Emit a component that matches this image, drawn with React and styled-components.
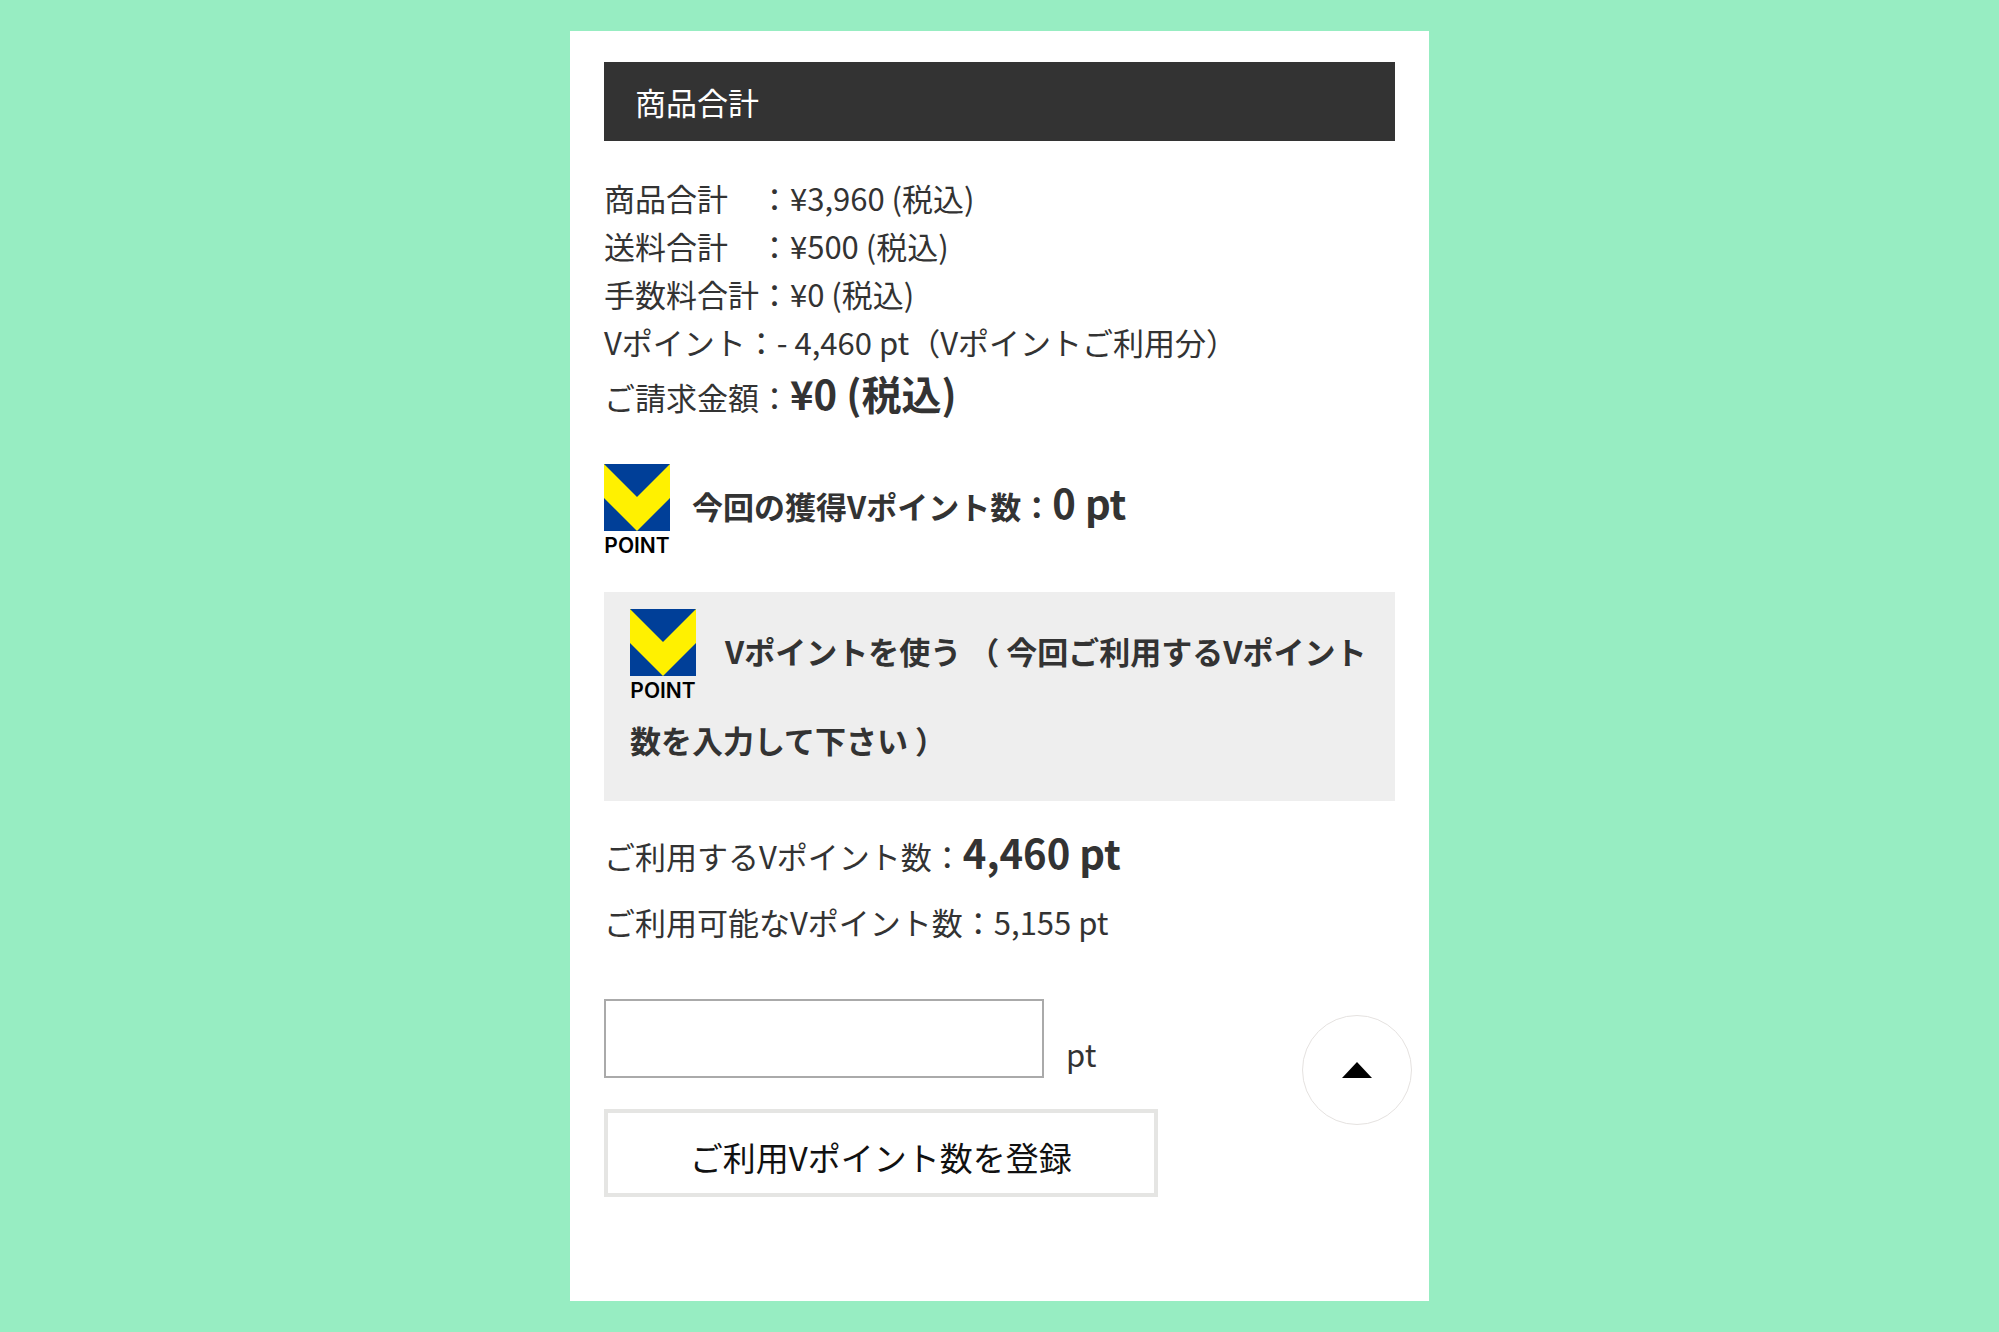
import React, { Component } from "react";
import styled, { createGlobalStyle } from "styled-components";

const totals = [
	{ label: "商品合計　：", value: "¥3,960 (税込)" },
	{ label: "送料合計　：", value: "¥500 (税込)" },
	{ label: "手数料合計：", value: "¥0 (税込)" },
	{ label: "Vポイント：", value: "- 4,460 pt（Vポイントご利用分）" },
	{ label: "ご請求金額：", value: "¥0 (税込)", total: true }
];

const VPointLogo = props => (
	<Logo viewBox="0 0 66 90" role="img" aria-label="V POINT" {...props}>
		<rect width="66" height="67" fill="#003f98" />
		<path d="M0 0 L33 33 L66 0 V34 L33 67 L0 34 Z" fill="#fff100" />
		<LogoText x="33" y="89" textAnchor="middle">
			POINT
		</LogoText>
	</Logo>
);

class App extends Component {
	state = {
		points: ""
	};

	onPointsChange = e => {
		this.setState({ points: e.target.value });
	};

	onSubmit = e => {
		e.preventDefault();
	};

	onScrollTop = () => {
		window.scrollTo(0, 0);
	};

	render() {
		return (
			<Page>
				<GlobalStyle />
				<Card>
					<Title>商品合計</Title>

					<Totals>
						{totals.map(({ label, value, total }) => (
							<TotalRow key={label} $total={total}>
								<dt>{label}</dt>
								<TotalValue $total={total}>{value}</TotalValue>
							</TotalRow>
						))}
					</Totals>

					<Earned>
						<VPointLogo />
						<span>
							今回の獲得Vポイント数：<Large>0 pt</Large>
						</span>
					</Earned>

					<UsePoints>
						<InlineLogo />
						Vポイントを使う （ 今回ご利用するVポイント数を入力して下さい ）
					</UsePoints>

					<Balance>
						<BalanceRow>
							ご利用するVポイント数：<Large>4,460 pt</Large>
						</BalanceRow>
						<BalanceRow>ご利用可能なVポイント数：5,155 pt</BalanceRow>
					</Balance>

					<form onSubmit={this.onSubmit}>
						<Field>
							<PointsInput
								id="points"
								type="text"
								inputMode="numeric"
								value={this.state.points}
								onChange={this.onPointsChange}
							/>
							<Unit htmlFor="points">pt</Unit>
						</Field>
						<SubmitButton type="submit">ご利用Vポイント数を登録</SubmitButton>
					</form>

					<ScrollTopButton type="button" aria-label="ページトップへ" onClick={this.onScrollTop}>
						<svg width="30" height="16" viewBox="0 0 30 16">
							<path d="M15 0 L30 16 H0 Z" fill="#000" />
						</svg>
					</ScrollTopButton>
				</Card>
			</Page>
		);
	}
}

export default App;

// styled components -------------------------

const GlobalStyle = createGlobalStyle`
	*, *::before, *::after {
		box-sizing: border-box;
	}

	body {
		margin: 0;
		background: #97edc2;
		color: #333;
		font-family: "Noto Sans CJK JP", sans-serif;
		font-size: 31px;
		line-height: 48px;
	}

	h1, h2, p, dl, dd {
		margin: 0;
	}

	button, input {
		font-family: inherit;
	}
`;

const Page = styled.div`
	display: flex;
	justify-content: center;
	padding: 31px 16px 32px;
`;

const Card = styled.main`
	position: relative;
	width: 100%;
	max-width: 859px;
	padding: 31px 34px 104px;
	background: #fff;
`;

const Title = styled.h1`
	padding: 16px 31px 15px;
	background: #333;
	color: #fff;
	font-size: 31px;
	font-weight: 400;
`;

const Totals = styled.dl`
	margin-top: 33px;
`;

const TotalRow = styled.div`
	display: flex;
	align-items: baseline;
	line-height: ${props => (props.$total ? "54px" : "48px")};
`;

const TotalValue = styled.dd`
	font-size: ${props => (props.$total ? "40px" : "31px")};
	font-weight: ${props => (props.$total ? 700 : 400)};
`;

const Large = styled.strong`
	font-size: 40px;
	font-weight: 700;
`;

const Logo = styled.svg`
	flex: none;
	width: 66px;
	height: 90px;
	overflow: visible;
`;

const LogoText = styled.text`
	fill: #000;
	font-family: Inter, sans-serif;
	font-size: 21px;
	font-weight: 600;
`;

const InlineLogo = styled(VPointLogo)`
	margin-right: 29px;
	vertical-align: -35px;
`;

const Earned = styled.p`
	display: flex;
	align-items: flex-start;
	gap: 22px;
	margin-top: 40px;
	font-weight: 700;
	line-height: 76px;
`;

const UsePoints = styled.h2`
	margin-top: 38px;
	padding: 17px 26px 20px;
	background: #eee;
	font-size: 31px;
	font-weight: 700;
	line-height: 82px;
`;

const Balance = styled.div`
	margin-top: 18px;
`;

const BalanceRow = styled.p`
	line-height: 66px;
`;

const Field = styled.div`
	display: flex;
	align-items: flex-end;
	gap: 22px;
	margin-top: 44px;
`;

const PointsInput = styled.input`
	width: 440px;
	height: 79px;
	padding: 0 16px;
	border: 2px solid #aaa;
	border-radius: 0;
	background: #fff;
	color: #333;
	font-size: 31px;
`;

const Unit = styled.label`
	line-height: 48px;
`;

const SubmitButton = styled.button`
	display: block;
	width: 70%;
	margin-top: 31px;
	padding: 20px 16px 12px;
	border: 4px solid #e5e5e3;
	background: #fff;
	color: #111;
	font-size: 33px;
	line-height: 48px;
	cursor: pointer;
`;

const ScrollTopButton = styled.button`
	position: absolute;
	right: 17px;
	bottom: 176px;
	display: flex;
	align-items: center;
	justify-content: center;
	width: 110px;
	height: 110px;
	padding: 0;
	border: 1px solid #e5e2e0;
	border-radius: 50%;
	background: #fff;
	cursor: pointer;
`;

// -------------------------------------------
